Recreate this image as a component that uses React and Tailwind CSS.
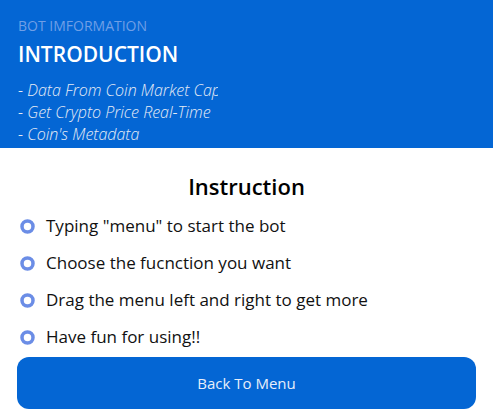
const features = ['- Data From Coin Market Cap', '- Get Crypto Price Real-Time', "- Coin's Metadata"];

const steps = [
  'Typing "menu" to start the bot',
  'Choose the fucnction you want',
  'Drag the menu left and right to get more',
  'Have fun for using!!',
];

function Ring() {
  return (
    <svg width="15" height="15" viewBox="0 0 15 15" className="shrink-0">
      <circle cx="7.5" cy="7.5" r="5.5" fill="none" stroke="#6b8de6" strokeWidth="3.5" />
    </svg>
  );
}

export default function App() {
  return (
    <div className="w-[493px] h-[419px] bg-white overflow-hidden font-['Open_Sans',sans-serif]">
      <div className="h-[148px] bg-[#0466d4] pl-[18px] pt-[17px]">
        <div className="text-[14px] leading-[18px] text-[#6f9fe6]">BOT IMFORMATION</div>
        <div className="mt-[4px] text-[21px] leading-[30px] font-semibold text-white">INTRODUCTION</div>
        <div className="mt-[10px] w-[200px] overflow-hidden">
          {features.map((f) => (
            <div key={f} className="whitespace-nowrap text-[16px] leading-[22px] italic font-light text-[#e6ebf4]">
              {f}
            </div>
          ))}
        </div>
      </div>
      <div className="px-[17px]">
        <h2 className="mt-[23px] text-center text-[22px] leading-[30px] font-semibold text-black">Instruction</h2>
        <ul className="mt-[10px] flex flex-col gap-[7px]">
          {steps.map((s) => (
            <li key={s} className="flex items-center gap-[11px] h-[30px] pl-[3px]">
              <Ring />
              <span className="text-[17px] text-[#111]">{s}</span>
            </li>
          ))}
        </ul>
        <button className="mt-[5px] w-full h-[52px] rounded-[12px] bg-[#0466d4] text-[15px] text-[#e8eefa]">
          Back To Menu
        </button>
      </div>
    </div>
  );
}
